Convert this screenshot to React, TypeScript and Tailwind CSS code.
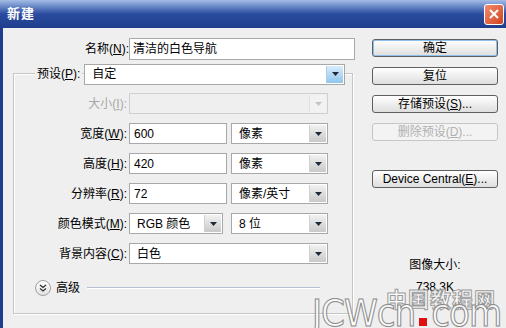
import React from 'react'

const font = { fontFamily: '"Liberation Sans", "Noto Sans CJK SC", sans-serif' }

function Arrow({ blue, disabled }: { blue?: boolean; disabled?: boolean }) {
  return (
    <div
      className={
        'w-[17px] h-full flex items-center justify-center border-l ' +
        (blue
          ? 'bg-gradient-to-b from-[#d8ecfa] to-[#8fc6ec] border-[#a9cfe9]'
          : disabled
          ? 'bg-[#f2f2f2] border-[#e0e0e0]'
          : 'bg-gradient-to-b from-[#f2f2f2] to-[#c9c9c9] border-[#d0d0d0]')
      }
    >
      <svg width="7" height="4" viewBox="0 0 7 4">
        <path d="M0 0h7L3.5 4z" fill={disabled ? '#c4c4c4' : '#1d2a3a'} />
      </svg>
    </div>
  )
}

function Select({ value, w, blue, disabled }: { value: string; w: string; blue?: boolean; disabled?: boolean }) {
  return (
    <div
      className={
        'flex items-stretch border p-[1px] ' +
        w +
        (disabled ? ' h-[21px] bg-[#efefef] border-[#cfcfcf]' : ' h-[21px] bg-white border-[#a8a8a8]')
      }
    >
      <div className="flex-1 pl-[6px] flex items-center text-[12px] text-black">{value}</div>
      <Arrow blue={blue} disabled={disabled} />
    </div>
  )
}

function Input({ value, w }: { value: string; w: string }) {
  return (
    <div className={'h-[21px] bg-white border border-[#a8a8a8] pl-[4px] flex items-center text-[12px] ' + w}>
      {value}
    </div>
  )
}

function Label({ text, k, disabled }: { text: string; k: string; disabled?: boolean }) {
  return (
    <div className={'w-[115px] text-right pr-[2px] text-[12px] ' + (disabled ? 'text-[#a8a8a8]' : 'text-black')}>
      {text}(<span className="underline">{k}</span>):
    </div>
  )
}

function Btn({ children, focus, disabled }: { children: React.ReactNode; focus?: boolean; disabled?: boolean }) {
  return (
    <div
      className={
        'w-[126px] h-[18px] rounded-[3px] border flex items-center justify-center text-[12px] ' +
        (disabled
          ? 'border-[#c6c6c6] text-[#b0b0b0] bg-[#f3f3f3]'
          : 'border-[#5f5f5f] text-black bg-gradient-to-b from-[#ffffff] to-[#dedede]') +
        (focus ? ' shadow-[inset_0_0_0_1px_#8ec0ec]' : '')
      }
    >
      {children}
    </div>
  )
}

export default function App() {
  return (
    <div className="w-[506px] h-[328px] overflow-hidden bg-[#efefef] relative" style={font}>
      {/* Title bar */}
      <div className="h-[28px] flex items-center justify-between pl-[7px] pr-[2px] bg-gradient-to-b from-[#a4bce6] via-[#2a4c9e] to-[#1f3d8c]">
        <span className="text-white font-bold text-[13px] tracking-[1px]">新建</span>
        <div className="w-[20px] h-[21px] rounded-[3px] border border-white bg-gradient-to-br from-[#f08a6a] to-[#d2401c] flex items-center justify-center">
          <svg width="10" height="10" viewBox="0 0 10 10">
            <path d="M1 1L9 9M9 1L1 9" stroke="white" strokeWidth="2" />
          </svg>
        </div>
      </div>

      <div className="flex h-[300px] border-l-[3px] border-[#1f3d8c]">
        {/* Left form */}
        <div className="w-[366px] pt-[10px]">
          <div className="flex items-center">
            <div className="w-[126px] text-right text-[12px]">
              名称(<span className="underline">N</span>):
            </div>
            <div className="w-[226px] h-[22px] bg-white border border-[#a8a8a8] pl-[3px] flex items-center text-[12px]">
              清洁的白色导航
            </div>
          </div>

          {/* Group box */}
          <div className="ml-[10px] mt-[13px] w-[340px] h-[241px] border border-[#c5c5c5] shadow-[inset_1px_1px_0_#ffffff,1px_1px_0_#ffffff]">
            <div className="flex items-center -mt-[11px] pl-[21px]">
              <div className="bg-[#efefef] px-[2px] text-[12px] h-[22px] flex items-center">
                预设(<span className="underline">P</span>):
              </div>
              <div className="ml-[2px]">
                <Select value="自定" w="w-[261px]" blue />
              </div>
            </div>

            <div className="flex flex-col gap-[9px] mt-[8px]">
              <div className="flex items-center">
                <Label text="大小" k="I" disabled />
                <Select value="" w="w-[199px]" disabled />
              </div>
              <div className="flex items-center">
                <Label text="宽度" k="W" />
                <Input value="600" w="w-[98px]" />
                <div className="ml-[4px]">
                  <Select value="像素" w="w-[97px]" />
                </div>
              </div>
              <div className="flex items-center">
                <Label text="高度" k="H" />
                <Input value="420" w="w-[98px]" />
                <div className="ml-[4px]">
                  <Select value="像素" w="w-[97px]" />
                </div>
              </div>
              <div className="flex items-center">
                <Label text="分辨率" k="R" />
                <Input value="72" w="w-[98px]" />
                <div className="ml-[4px]">
                  <Select value="像素/英寸" w="w-[97px]" />
                </div>
              </div>
              <div className="flex items-center">
                <Label text="颜色模式" k="M" />
                <Select value="RGB 颜色" w="w-[94px]" />
                <div className="ml-[8px]">
                  <Select value="8 位" w="w-[97px]" />
                </div>
              </div>
              <div className="flex items-center">
                <Label text="背景内容" k="C" />
                <Select value="白色" w="w-[199px]" />
              </div>
            </div>

            <div className="flex items-center mt-[15px] pl-[21px]">
              <div className="w-[16px] h-[16px] rounded-full border border-[#a0a0a0] bg-gradient-to-b from-white to-[#e2e2e2] flex items-center justify-center">
                <svg width="8" height="8" viewBox="0 0 8 8">
                  <path d="M1 1l3 2.5L7 1M1 4.5l3 2.5 3-2.5" stroke="#333" strokeWidth="1.3" fill="none" />
                </svg>
              </div>
              <span className="ml-[5px] text-[12px]">高级</span>
              <div className="ml-[7px] w-[233px] h-[2px] border-t border-[#b4bfd0] border-b-white border-b" />
            </div>
          </div>
        </div>

        {/* Right buttons */}
        <div className="flex flex-col pt-[11px] pl-[3px]">
          <div className="flex flex-col gap-[10px]">
            <Btn focus>确定</Btn>
            <Btn>复位</Btn>
            <Btn>
              存储预设(<span className="underline">S</span>)...
            </Btn>
            <Btn disabled>
              删除预设(<span className="underline">D</span>)...
            </Btn>
          </div>
          <div className="mt-[29px]">
            <Btn>
              Device Central(<span className="underline">E</span>)...
            </Btn>
          </div>
          <div className="mt-[68px] text-center text-[12px]">图像大小:</div>
          <div className="mt-[4px] text-center text-[12px]">738.3K</div>
        </div>
      </div>

      {/* watermark */}
      <div className="absolute left-[386px] top-[284px] text-[21px] font-bold tracking-[1px] text-white/80 [-webkit-text-stroke:1px_#9a9a9a]">
        中国教程网
      </div>
      <div className="absolute left-[312px] top-[294px] flex items-baseline text-[38px] leading-none tracking-[-1px] text-white/80 [-webkit-text-stroke:1px_#8a8a8a]" style={{ fontFamily: '"DejaVu Sans Condensed", "Liberation Sans", sans-serif' }}>
        <span>JCWcn</span>
        <span className="inline-block w-[8px] h-[8px] bg-[#e01010] mx-[4px]" />
        <span>com</span>
      </div>
    </div>
  )
}
